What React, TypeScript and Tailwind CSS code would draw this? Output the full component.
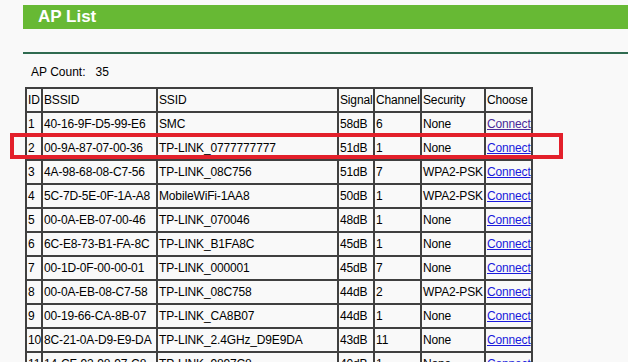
import React from "react";

const rows: [string, string, string, string, string, string][] = [
  ["1", "40-16-9F-D5-99-E6", "SMC", "58dB", "6", "None"],
  ["2", "00-9A-87-07-00-36", "TP-LINK_0777777777", "51dB", "1", "None"],
  ["3", "4A-98-68-08-C7-56", "TP-LINK_08C756", "51dB", "7", "WPA2-PSK"],
  ["4", "5C-7D-5E-0F-1A-A8", "MobileWiFi-1AA8", "50dB", "1", "WPA2-PSK"],
  ["5", "00-0A-EB-07-00-46", "TP-LINK_070046", "48dB", "1", "None"],
  ["6", "6C-E8-73-B1-FA-8C", "TP-LINK_B1FA8C", "45dB", "1", "None"],
  ["7", "00-1D-0F-00-00-01", "TP-LINK_000001", "45dB", "7", "None"],
  ["8", "00-0A-EB-08-C7-58", "TP-LINK_08C758", "44dB", "2", "WPA2-PSK"],
  ["9", "00-19-66-CA-8B-07", "TP-LINK_CA8B07", "44dB", "1", "None"],
  ["10", "8C-21-0A-D9-E9-DA", "TP-LINK_2.4GHz_D9E9DA", "43dB", "11", "None"],
  ["11", "14-CF-92-98-97-C8", "TP-LINK_9897C8", "40dB", "1", "None"],
];

const td = "border border-[#404040] pl-px pr-0 py-px leading-[20px] whitespace-nowrap";

export default function App() {
  return (
    <div
      className="relative flex w-[643px] h-[362px] overflow-hidden bg-white text-black"
      style={{ fontFamily: '"Liberation Sans", Arial, sans-serif' }}
    >
      <div className="w-[628px] h-full bg-[#f9f9f9] pt-[5px]">
        <div className="ml-[23px] h-[24px] bg-[#67b934] pl-[15px] text-[17px] font-bold leading-[24px] text-white">
          AP List
        </div>
        <div className="ml-[23px] mt-[23px] border-t-2 border-[#2f6b50]" />
        <div className="ml-[31px] mt-[11px] text-[12px] leading-[14px]">
          AP Count:&nbsp;&nbsp;&nbsp;35
        </div>
        <table className="ml-[25px] mt-[8px] w-[506px] table-fixed border-separate border-spacing-0 border border-[#404040] text-[12px] tracking-[-0.15px]">
          <colgroup>
            <col className="w-[16px]" />
            <col className="w-[115px]" />
            <col className="w-[181px]" />
            <col className="w-[36px]" />
            <col className="w-[47px]" />
            <col className="w-[64px]" />
            <col className="w-[47px]" />
          </colgroup>
          <thead>
            <tr>
              <td className={td}>ID</td>
              <td className={td}>BSSID</td>
              <td className={td}>SSID</td>
              <td className={td}>Signal</td>
              <td className={td}>Channel</td>
              <td className={td}>Security</td>
              <td className={td}>Choose</td>
            </tr>
          </thead>
          <tbody>
            {rows.map((r, i) => (
              <tr key={r[0]}>
                <td className={td}>{r[0]}</td>
                <td className={td}>{r[1]}</td>
                <td className={td}>{r[2]}</td>
                <td className={td}>{r[3]}</td>
                <td className={td}>{r[4]}</td>
                <td className={td}>{r[5]}</td>
                <td className={td}>
                  <a className={i === 0 ? "underline text-[#4a2a9a]" : "underline text-[#1a1adc]"} href="#">
                    Connect
                  </a>
                </td>
              </tr>
            ))}
          </tbody>
        </table>
      </div>
      <div className="absolute left-[10px] top-[133px] w-[553px] h-[26px] border-4 border-[#e3202b]" />
    </div>
  );
}
